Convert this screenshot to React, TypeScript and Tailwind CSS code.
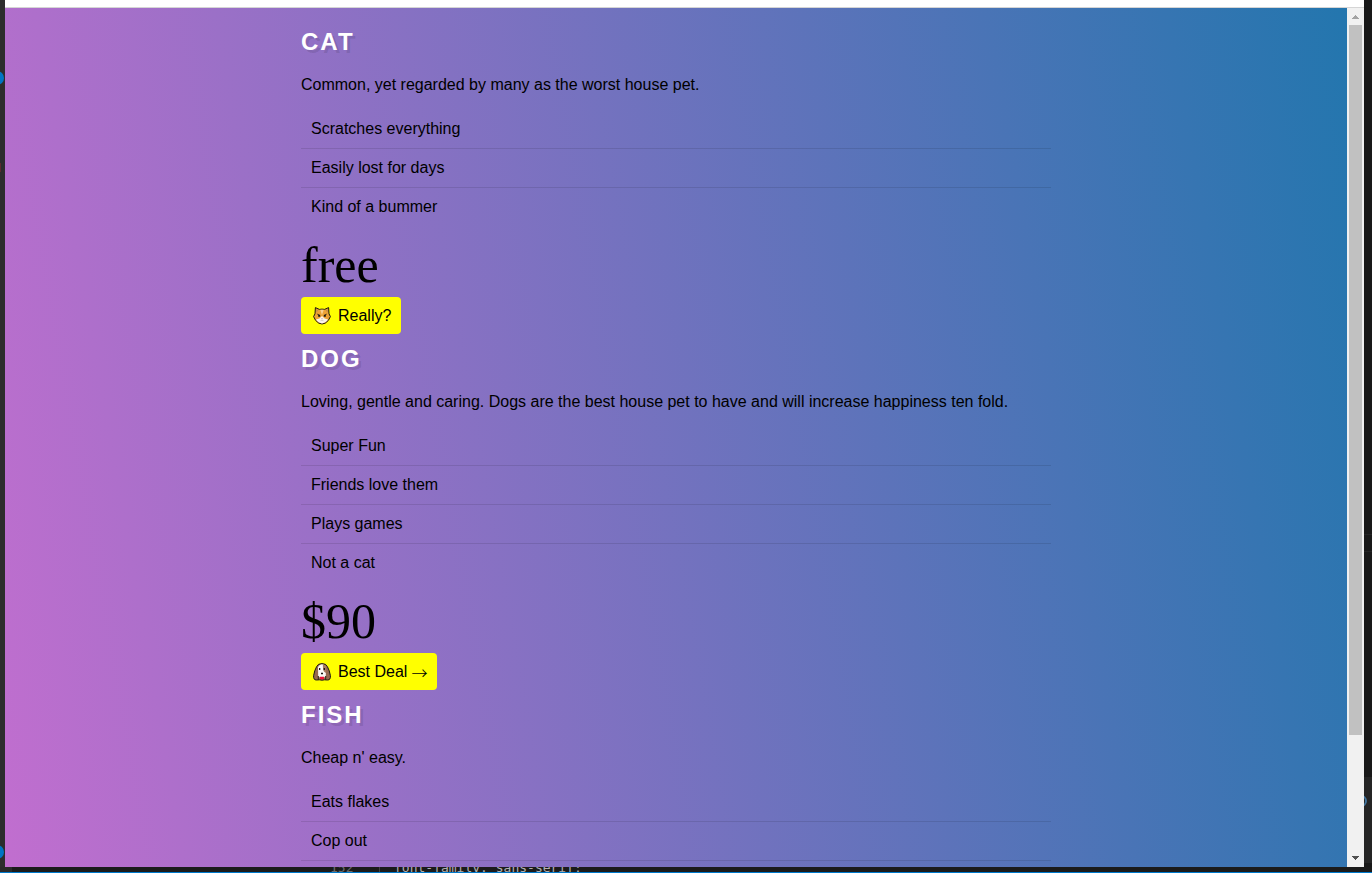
import type { ReactNode } from "react";

type Pet = {
  name: string;
  blurb: string;
  features: string[];
  price: string;
  cta: string;
  icon: ReactNode;
  arrow?: boolean;
};

function CatFace() {
  return (
    <svg viewBox="0 0 18 18" className="h-[18px] w-[18px] shrink-0" aria-hidden="true">
      <path
        d="M2.4 0.6 L6.4 2.4 Q9 1.8 11.6 2.4 L15.6 0.6 L16 6.8 L17.4 9.6 L15.4 13.4 Q12.4 17 9 17 Q5.6 17 2.6 13.4 L0.6 9.6 L2 6.8 Z"
        fill="#eda236"
        stroke="#1c1712"
        strokeWidth="1"
        strokeLinejoin="round"
      />
      <path d="M3.2 2 L5.4 3.4 L3.4 5.6 Z M14.8 2 L12.6 3.4 L14.6 5.6 Z" fill="#c58c4c" />
      <path d="M7.2 2.8 L9 8 L10.8 2.8 Z" fill="#fbd294" />
      <path
        d="M3 12.6 L6.4 11.4 L9 9 L11.6 11.4 L15 12.6 Q12.2 16.4 9 16.4 Q5.8 16.4 3 12.6 Z"
        fill="#faf4ec"
      />
      <path d="M3.8 6.6 L7.2 8 V9.8 H5.2 V8.2 Z M14.2 6.6 L10.8 8 V9.8 H12.8 V8.2 Z" fill="#1c1712" />
      <path d="M8.2 11.2 h1.6 L9 12.2 Z" fill="#b98a80" />
      <path d="M7.6 13.6 Q9 12.8 10.4 13.6" fill="none" stroke="#c5bab4" strokeWidth="0.7" />
    </svg>
  );
}

function DogFace() {
  return (
    <svg viewBox="0 0 18 18" className="h-[18px] w-[18px] shrink-0" aria-hidden="true">
      <path
        d="M9 0.6 Q13.2 0.6 14.4 3.6 Q16.6 7.6 17.4 12.6 Q17.8 17 14.6 17 L11.6 16.8 Q9 17.6 6.4 16.8 L3.4 17 Q0.2 17 0.6 12.6 Q1.4 7.6 3.6 3.6 Q4.8 0.6 9 0.6 Z"
        fill="#96694f"
        stroke="#1c1712"
        strokeWidth="1"
        strokeLinejoin="round"
      />
      <path
        d="M5 4 Q6.4 1.2 9 1.2 Q11.6 1.2 13 4 L12.8 12.6 Q11.4 15.4 9 15.4 Q6.6 15.4 5.2 12.6 Z"
        fill="#fbf8f5"
      />
      <path d="M9.8 1.2 Q12.2 1.6 13.2 4 L13 10 Q10.4 9.2 10 5.6 Z" fill="#a67a5e" />
      <path d="M5.2 13 L5.4 16.6 M12.8 13 L12.6 16.6" stroke="#1c1712" strokeWidth="0.8" />
      <path d="M6 5 h1.3 v2 h-1.3 z M10.7 5 h1.3 v2 h-1.3 z" fill="#1c1712" />
      <path d="M8 9.8 h2 v1.4 h-2 z" fill="#1c1712" />
      <path d="M7 13.8 h4 v1.4 Q9 18 7 15.2 Z" fill="#f01238" />
    </svg>
  );
}

function FishIcon() {
  return (
    <svg viewBox="0 0 18 18" className="h-[18px] w-[18px] shrink-0" aria-hidden="true">
      <path
        d="M1 9 Q6 3 12 8 L17 4 V14 L12 10 Q6 15 1 9 Z"
        fill="#4aa3df"
        stroke="#1c1712"
        strokeWidth="1.2"
      />
    </svg>
  );
}

const pets: Pet[] = [
  {
    name: "CAT",
    blurb: "Common, yet regarded by many as the worst house pet.",
    features: ["Scratches everything", "Easily lost for days", "Kind of a bummer"],
    price: "free",
    cta: "Really?",
    icon: <CatFace />,
  },
  {
    name: "DOG",
    blurb:
      "Loving, gentle and caring. Dogs are the best house pet to have and will increase happiness ten fold.",
    features: ["Super Fun", "Friends love them", "Plays games", "Not a cat"],
    price: "$90",
    cta: "Best Deal",
    icon: <DogFace />,
    arrow: true,
  },
  {
    name: "FISH",
    blurb: "Cheap n' easy.",
    features: ["Eats flakes", "Cop out", "Quiet"],
    price: "$10",
    cta: "Sure",
    icon: <FishIcon />,
  },
];

function Plan({ pet }: { pet: Pet }) {
  return (
    <section className="flex flex-col items-start pb-[11px]">
      <h2 className="mb-5 text-2xl leading-7 font-bold tracking-[2px] text-white [text-shadow:3px_3px_0_rgba(0,0,0,0.1)]">
        {pet.name}
      </h2>
      <p className="mb-4 text-base leading-[18px]">{pet.blurb}</p>
      <ul className="mb-3 w-full">
        {pet.features.map((feature) => (
          <li
            key={feature}
            className="border-b border-black/10 p-[10px] text-base leading-[18px] last:border-b-0"
          >
            {feature}
          </li>
        ))}
      </ul>
      <span className="mb-1 font-['Liberation_Serif',serif] text-[50px] leading-[55px]">
        {pet.price}
      </span>
      <button
        type="button"
        className="flex h-[37px] items-center rounded-[4px] bg-[#ffff00] pr-[10px] pl-3 text-base leading-[18px]"
      >
        {pet.icon}
        <span className="pl-[7px]">{pet.cta}</span>
        {pet.arrow && (
          <span className="pl-1 font-['Noto_Sans_CJK_JP',sans-serif] leading-[18px] font-light">→</span>
        )}
      </button>
    </section>
  );
}

function ScrollBar() {
  return (
    <div className="flex w-[17px] shrink-0 flex-col bg-[#f1f1f1]" aria-hidden="true">
      <svg viewBox="0 0 17 17" className="h-[17px] w-[17px]" shapeRendering="crispEdges">
        <path d="M8 7h1v1h1v1h1v1h1v1H5v-1h1V9h1V8h1z" fill="#a3a3a3" />
      </svg>
      <div className="min-h-0 flex-1 px-[2px]">
        <div className="h-[86%] bg-[#c1c1c1]" />
      </div>
      <svg viewBox="0 0 17 17" className="h-[17px] w-[17px]" shapeRendering="crispEdges">
        <path d="M5 6h7v1h-1v1h-1v1H9v1H8V9H7V8H6V7H5z" fill="#505050" />
      </svg>
    </div>
  );
}

export default function App() {
  return (
    <div className="flex h-screen flex-col overflow-hidden bg-[#1b1b1b] font-['Liberation_Sans',Arial,sans-serif] text-black">
      <div className="flex min-h-0 flex-1">
        <aside className="relative w-[5px] shrink-0 overflow-hidden bg-[#2d2d2d]">
          <span className="absolute top-[71px] right-px h-[14px] w-[14px] rounded-full bg-[#0075c4]" />
          <span className="absolute top-[163px] left-0 h-[9px] w-px bg-[#5c2b2e]" />
          <span className="absolute right-px bottom-[8px] h-[14px] w-[14px] rounded-full bg-[#0075c4]" />
        </aside>
        <div className="flex min-w-0 flex-1 flex-col">
          <header className="h-2 shrink-0 border-b border-[#d5d5d5] bg-white" />
          <div className="flex min-h-0 flex-1">
            <main className="min-w-0 flex-1 overflow-hidden bg-[linear-gradient(260deg,#2376ae_0%,#c16ecf_100%)]">
              <div className="mx-auto flex max-w-[750px] flex-col pt-5">
                {pets.map((pet) => (
                  <Plan key={pet.name} pet={pet} />
                ))}
              </div>
            </main>
            <ScrollBar />
          </div>
        </div>
        <aside className="relative flex w-2 shrink-0 flex-col justify-end overflow-hidden bg-[#191919]">
          <span className="absolute top-[534px] left-0 h-[18px] w-full border-y border-[#252525]" />
          <div className="mb-1 h-[86px] bg-[#252525]" />
          <span className="absolute right-[5px] bottom-[60px] h-[12px] w-[12px] rounded-full border-2 border-[#41739b]" />
        </aside>
      </div>
      <footer className="flex h-[6px] shrink-0 overflow-hidden border-b border-[#007acc]">
        <div className="w-3 shrink-0 bg-[#2a2a2a]" />
        <div className="flex items-end pl-[318px] font-['DejaVu_Sans_Mono',monospace] text-[13px] leading-[8px]">
          <span className="w-[49px] text-[#6b6b6b]">152</span>
          <span className="border-l border-[#404040] pl-[14px] text-[#b0b0b0]">
            font-family: sans-serif;
          </span>
        </div>
      </footer>
    </div>
  );
}
